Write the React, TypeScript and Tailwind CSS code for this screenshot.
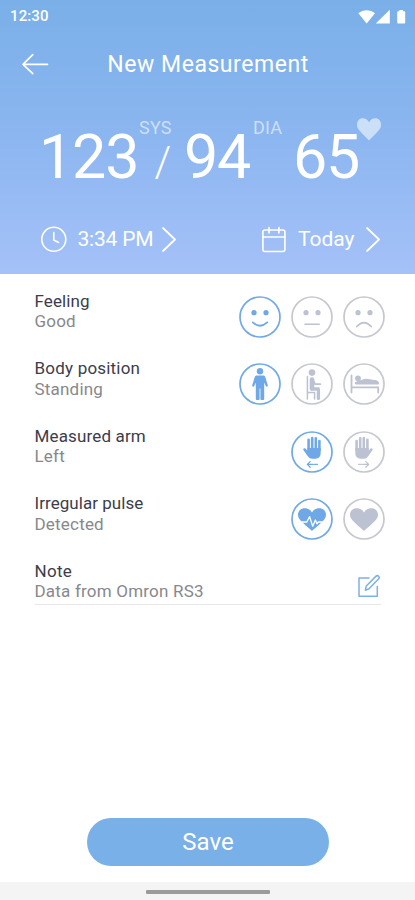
import type { ReactNode } from "react";
import clsx from "clsx";

type IconProps = {
  className?: string;
};

const HEART_PATH =
  "M21 33C19.4 31.4 14 27.2 10.6 23.6C8 20.9 7 19.2 7 16.8C7 13.1 9.9 10.3 13.6 10.3C16.8 10.3 19.3 11.7 21 14.4C22.7 11.7 25.2 10.3 28.4 10.3C32.1 10.3 35 13.1 35 16.8C35 19.2 34 20.9 31.4 23.6C28 27.2 22.6 31.4 21 33Z";

const BackIcon = () => (
  <svg width="28" height="22" viewBox="0 0 28 22" fill="none" stroke="currentColor" strokeWidth="1.7" strokeLinecap="round" strokeLinejoin="round">
    <path d="M26.5 11.3H2M11.8 1.6L2 11.3L11.8 20.6" />
  </svg>
);

const ChevronIcon = () => (
  <svg width="16" height="27" viewBox="0 0 16 27" fill="none" stroke="currentColor" strokeWidth="1.8" strokeLinecap="round" strokeLinejoin="round">
    <path d="M2 2L14 13.5L2 25" />
  </svg>
);

const ClockIcon = () => (
  <svg width="27" height="27" viewBox="0 0 27 27" fill="none" stroke="currentColor" strokeWidth="1.6" strokeLinecap="round" strokeLinejoin="round">
    <circle cx="13.8" cy="13.3" r="12" />
    <path d="M13.8 6.5V14L18.6 16.5" />
  </svg>
);

const CalendarIcon = () => (
  <svg width="25" height="27" viewBox="0 0 25 27" fill="none" stroke="currentColor" strokeWidth="1.6" strokeLinecap="round" strokeLinejoin="round">
    <rect x="1.9" y="4" width="22" height="21.5" rx="2" />
    <path d="M1.9 11H23.9M8 1.5V7M17.9 1.5V7" />
  </svg>
);

const EditIcon = () => (
  <svg width="24" height="24" viewBox="0 0 24 24" fill="none" stroke="currentColor" strokeWidth="1.5" strokeLinejoin="round">
    <path d="M12.5 4H2V22.2H20.3V12" />
    <path d="M8.3 16.3L9.3 12L18.8 2.4C19.7 1.5 20.9 1.5 21.6 2.2C22.4 3 22.4 4.1 21.5 5L12 14.8Z" />
  </svg>
);

const SmallHeartIcon = () => (
  <svg width="24" height="23" viewBox="7 10 28 23.5" preserveAspectRatio="none" fill="currentColor">
    <path d={HEART_PATH} />
  </svg>
);

const StatusIcons = () => (
  <svg width="48" height="16" viewBox="0 0 48 16" fill="currentColor" className="overflow-visible">
    <path d="M-0.7 4.2C4.3 0.2 11 0.2 16 4.2L7.7 14.6Z" />
    <path d="M30.8 0.8V14.5H16.8Z" />
    <path d="M40.4 1H44V2.2H45.3Q46.2 2.2 46.2 3.2V13.5Q46.2 14.5 45.3 14.5H39.1Q38.2 14.5 38.2 13.5V3.2Q38.2 2.2 39.1 2.2H40.4Z" />
  </svg>
);

const Eyes = () => (
  <g fill="currentColor" stroke="none">
    <circle cx="15" cy="16.7" r="2.6" />
    <circle cx="27" cy="16.7" r="2.6" />
  </g>
);

const Smile = () => (
  <g fill="none" stroke="currentColor" strokeWidth="1.8" strokeLinecap="round">
    <Eyes />
    <path d="M13.8 26.4Q21 33 28.2 26.4" />
  </g>
);

const Neutral = () => (
  <g fill="none" stroke="currentColor" strokeWidth="1.6" strokeLinecap="round">
    <Eyes />
    <path d="M14 28.2H28.2" />
  </g>
);

const Frown = () => (
  <g fill="none" stroke="currentColor" strokeWidth="1.8" strokeLinecap="round">
    <Eyes />
    <path d="M13.8 30.5Q21 22.6 28.2 30.5" />
  </g>
);

const Standing = () => (
  <g fill="currentColor">
    <circle cx="21" cy="8.2" r="3.2" />
    <path d="M18 12.6H24C25.4 12.6 26 13.2 26.4 14.5L28.8 22.2C29.1 23.7 27.3 24.2 26.8 22.9L25.2 19.4V36Q25.2 37 24.2 37H22.2Q21.4 37 21.4 36V25.5H20.6V36Q20.6 37 19.8 37H17.8Q16.8 37 16.8 36V19.4L15.2 22.9C14.7 24.2 12.9 23.7 13.2 22.2L15.6 14.5C16 13.2 16.6 12.6 18 12.6Z" />
  </g>
);

const Sitting = () => (
  <g fill="none" stroke="currentColor" strokeLinecap="round" strokeLinejoin="round">
    <circle cx="21" cy="9.6" r="3.3" fill="currentColor" stroke="none" />
    <path d="M16.4 13.5V36M16.4 29.6H23.6V36" strokeWidth="1.5" />
    <path d="M21 16.5V25.3" strokeWidth="4.6" />
    <path d="M22 17L24 21.2H29.3" strokeWidth="1.8" />
    <path d="M20.5 26H27.4V35.4" strokeWidth="3.3" />
  </g>
);

const Lying = () => (
  <g fill="none" stroke="currentColor" strokeLinecap="round" strokeLinejoin="round">
    <path d="M8.5 12.3V29.5M8.5 24.3H35.2V29.5" strokeWidth="1.8" />
    <circle cx="15" cy="15.3" r="2.9" fill="currentColor" stroke="none" />
    <path d="M18.8 17.3L22.5 16.2L33.5 17.8Q35.8 18.4 35.5 21H12.8Q11.2 19.6 13.3 19.1Z" fill="currentColor" strokeWidth="1" />
  </g>
);

const Hand = () => (
  <g fill="none" stroke="currentColor" strokeLinecap="round" strokeLinejoin="round">
    <path d="M17.6 8.7V18M21.2 7V18M24.8 7.3V18M28.4 10V19" strokeWidth="2.6" />
    <path d="M16.3 17H29.7V21.5C29.7 25.5 27.9 27.7 24.4 27.7H21.5C18.8 27.7 17.4 26.2 15.9 23.9L12.4 18.9C11.7 17.6 13.2 16.6 14.4 17.6L16.3 19.5Z" fill="currentColor" stroke="none" />
    <path d="M26.3 33.4H23.7M22.3 33.4H16.5M19.2 30.6L16.3 33.4L19.2 36.2" strokeWidth="1.3" />
  </g>
);

const RightHand = () => (
  <g transform="translate(42 0) scale(-1 1)">
    <Hand />
  </g>
);

const PulseHeart = () => (
  <g>
    <path d={HEART_PATH} fill="currentColor" />
    <path d="M7 24H15.8L18.6 18.6L21.7 28.2L24.4 22L26 25.8L27.4 24H35" fill="none" stroke="white" strokeWidth="1.3" strokeLinejoin="round" />
  </g>
);

const PlainHeart = () => <path d={HEART_PATH} fill="currentColor" />;

type OptionProps = {
  label: string;
  selected?: boolean;
  children: ReactNode;
};

const Option = ({ label, selected = false, children }: OptionProps) => (
  <button
    type="button"
    aria-label={label}
    aria-pressed={selected}
    className={clsx("block", selected ? "text-[#6fa8e6]" : "text-[#bdc2d3]")}
  >
    <svg width="42" height="42" viewBox="0 0 42 42">
      <circle
        cx="21"
        cy="21"
        r="20"
        fill="none"
        strokeWidth="1.7"
        className={selected ? "stroke-[#71a9e6]" : "stroke-[#c6c8d0]"}
      />
      {children}
    </svg>
  </button>
);

type FieldProps = {
  title: string;
  value: string;
  titleClass?: string;
  children?: ReactNode;
};

const Field = ({ title, value, titleClass, children }: FieldProps) => (
  <div className="flex h-[67.4px] items-start justify-between">
    <div className="text-[17px] leading-[20.4px]">
      <p className={clsx("text-[#3b3d4a]", titleClass)}>{title}</p>
      <p className="tracking-[0.2px] text-[#87888c]">{value}</p>
    </div>
    <div className="flex gap-[10px] pt-[5px]">{children}</div>
  </div>
);

const StatusBar = ({ className }: IconProps) => (
  <div className={clsx("flex items-center justify-between pr-[8px] pl-[10px]", className)}>
    <span className="text-[15px] font-medium tracking-[0.1px]">12:30</span>
    <StatusIcons />
  </div>
);

const App = () => (
  <div className="flex h-[900px] w-[415px] flex-col overflow-hidden bg-white font-['Roboto',sans-serif]">
    <header className="flex h-[273.5px] shrink-0 flex-col bg-linear-to-b from-[#7aafe8] via-[#8cb6f0] to-[#a5c1f8] text-white">
      <StatusBar className="h-8 pt-px" />

      <div className="grid h-16 grid-cols-[87px_1fr_87px] items-center">
        <button type="button" aria-label="Back" className="pl-[21px]">
          <BackIcon />
        </button>
        <h1 className="pt-[2px] pl-px text-center text-[23px] tracking-[0.55px] whitespace-nowrap">
          New Measurement
        </h1>
      </div>

      <div className="flex h-[106px] pt-[2px] pl-[39px] whitespace-nowrap">
        <span className="w-[100px] pt-[23px] text-[61px] leading-[72px] tracking-[-1.2px]">123</span>
        <div className="flex w-[45px] flex-col">
          <span className="pt-[19px] text-[18px] leading-[22px] tracking-[0.2px] text-[#cbdff9]">SYS</span>
          <span className="pl-[15.5px] text-[42px] leading-[46px] font-light">/</span>
        </div>
        <span className="w-[69px] pt-[23px] text-[61px] leading-[72px] tracking-[-1.2px]">94</span>
        <span className="w-[40px] pt-[19px] text-[18px] leading-[22px] tracking-[0.2px] text-[#cbdff9]">DIA</span>
        <span className="w-[64px] pt-[23px] text-[61px] leading-[72px] tracking-[-1.2px]">65</span>
        <span className="pt-[19.5px] text-[#cbdff9]">
          <SmallHeartIcon />
        </span>
      </div>

      <div className="flex h-[71.5px] items-center justify-between pt-[4px] pr-[34px] pl-[40px] text-[21px]">
        <button type="button" className="flex items-center">
          <ClockIcon />
          <span className="w-[94px] pl-[10.5px] text-left tracking-[-0.2px] whitespace-nowrap">
            3:34 PM
          </span>
          <ChevronIcon />
        </button>
        <button type="button" className="flex items-center">
          <CalendarIcon />
          <span className="w-[79px] pl-[12px] text-left">Today</span>
          <ChevronIcon />
        </button>
      </div>
    </header>

    <main className="flex grow flex-col pt-[17.5px] pr-[30px] pl-[34.5px]">
      <Field title="Feeling" value="Good" titleClass="tracking-[0.1px]">
        <Option label="Good" selected>
          <Smile />
        </Option>
        <Option label="Neutral">
          <Neutral />
        </Option>
        <Option label="Bad">
          <Frown />
        </Option>
      </Field>
      <Field title="Body position" value="Standing" titleClass="tracking-[0.2px]">
        <Option label="Standing" selected>
          <Standing />
        </Option>
        <Option label="Sitting">
          <Sitting />
        </Option>
        <Option label="Lying">
          <Lying />
        </Option>
      </Field>
      <Field title="Measured arm" value="Left" titleClass="tracking-[0.15px]">
        <Option label="Left" selected>
          <Hand />
        </Option>
        <Option label="Right">
          <RightHand />
        </Option>
      </Field>
      <Field title="Irregular pulse" value="Detected" titleClass="tracking-[0.05px]">
        <Option label="Detected" selected>
          <PulseHeart />
        </Option>
        <Option label="Not detected">
          <PlainHeart />
        </Option>
      </Field>

      <div className="mr-[4px] flex h-[44px] items-start justify-between border-b border-[#e6e7ea]">
        <div className="text-[17px] leading-[20.4px]">
          <p className="tracking-[0.3px] text-[#3b3d4a]">Note</p>
          <p className="tracking-[0.2px] text-[#87888c]">Data from Omron RS3</p>
        </div>
        <button type="button" aria-label="Edit note" className="pt-[13px] text-[#7fb0e6]">
          <EditIcon />
        </button>
      </div>

      <button
        type="button"
        className="mt-auto mb-[16.5px] ml-[52.5px] h-12 w-[242px] rounded-full bg-[#7ab0e8] text-[24px] text-white"
      >
        Save
      </button>
    </main>

    <footer className="flex h-[18px] shrink-0 justify-center bg-[#f4f4f4] pt-[7.5px]">
      <div className="h-[4.5px] w-[124px] rounded-[1px] bg-[#9b9b9b]" />
    </footer>
  </div>
);

export default App;
